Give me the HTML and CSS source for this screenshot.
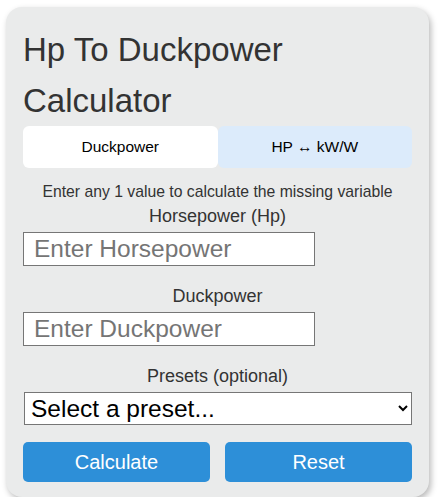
FILE: index.html
```html
<!DOCTYPE html>
<html lang="en">
<head>
    <meta charset="UTF-8">
    <meta name="viewport" content="width=device-width, initial-scale=1.0">
    <title>Hp To Duckpower Calculator</title>
    <link rel="stylesheet" href="styles.css">
</head>
<body>
    <div class="calculator">
        <h1>Hp To Duckpower Calculator</h1>

        <!-- Tabs -->
        <div class="tabs">
            <button class="tab active">Duckpower</button>
            <button class="tab">HP &harr; kW/W</button>
        </div>

        <p class="info">Enter any 1 value to calculate the missing variable</p>

        <label for="hp">Horsepower (Hp)</label>
        <input type="number" id="hp" placeholder="Enter Horsepower">

        <label for="duckpower" class="spaced">Duckpower</label>
        <input type="number" id="duckpower" placeholder="Enter Duckpower">

        <label for="presets" class="spaced">Presets (optional)</label>
        <select id="presets">
            <option value="">Select a preset...</option>
            <option value="1">Lawn mower (5 Hp)</option>
            <option value="2">Small car (100 Hp)</option>
        </select>

        <div class="buttons">
            <button class="btn" onclick="calculate()">Calculate</button>
            <button class="btn" onclick="resetForm()">Reset</button>
        </div>
    </div>

    <script>
        // 1 hp = 746 W, one duck paddles at roughly 1.5 W
        const DUCKS_PER_HP = 746 / 1.5;

        function calculate() {
            const hp = parseFloat(document.getElementById("hp").value);
            const duck = parseFloat(document.getElementById("duckpower").value);

            if (!isNaN(hp)) {
                document.getElementById("duckpower").value = (hp * DUCKS_PER_HP).toFixed(2);
            } else if (!isNaN(duck)) {
                document.getElementById("hp").value = (duck / DUCKS_PER_HP).toFixed(4);
            }
        }

        function resetForm() {
            document.getElementById("hp").value = "";
            document.getElementById("duckpower").value = "";
            document.getElementById("presets").value = "";
        }
    </script>
</body>
</html>
```

FILE: styles.css
```css
html, body {
    margin: 0;
    padding: 0;
    font-family: Arial, "Liberation Sans", sans-serif;
}

body {
    background-color: #fff;
    padding: 7px 0 0 6px;
}

.calculator {
    box-sizing: border-box;
    width: 423px;
    padding: 17px 17px 15px 17px;
    background-color: #eaebeb;
    border-radius: 16px;
    box-shadow: 2px 3px 6px rgba(0, 0, 0, 0.28);
    display: flex;
    flex-direction: column;
}

h1 {
    margin: 0;
    font-size: 33px;
    font-weight: normal;
    line-height: 51px;
    color: #333;
}

.tabs {
    display: flex;
    height: 42px;
}

.tab {
    flex: 1;
    border: none;
    border-radius: 6px;
    background-color: #dcebfb;
    color: #000;
    font-family: inherit;
    font-size: 15.5px;
    cursor: pointer;
}

.tab.active {
    background-color: #fff;
}

.info {
    margin: 12px 0 0 0;
    font-size: 15.75px;
    line-height: 24px;
    color: #333;
    text-align: center;
}

label {
    display: block;
    font-size: 18px;
    line-height: 24px;
    color: #333;
    text-align: center;
    margin-bottom: 4px;
}

label.spaced {
    margin-top: 18px;
}

input {
    box-sizing: border-box;
    width: 292px;
    height: 34px;
    padding: 0 10px;
    border: 1px solid #767676;
    background-color: #fff;
    font-family: inherit;
    font-size: 24.5px;
    color: #222;
}

input::placeholder {
    color: #757575;
}

select {
    box-sizing: border-box;
    width: 388px;
    height: 33px;
    margin-left: 1px;
    padding: 0 2px;
    border: 1px solid #767676;
    border-radius: 0;
    background-color: #fff;
    font-family: inherit;
    font-size: 24.5px;
    color: #000;
}

.buttons {
    display: flex;
    gap: 15px;
    margin-top: 17px;
}

.btn {
    flex: 1;
    height: 40px;
    border: none;
    border-radius: 5px;
    background-color: #2d8fd8;
    color: #fff;
    font-family: inherit;
    font-size: 20px;
    cursor: pointer;
}

.btn:hover {
    background-color: #2379bb;
}
```
